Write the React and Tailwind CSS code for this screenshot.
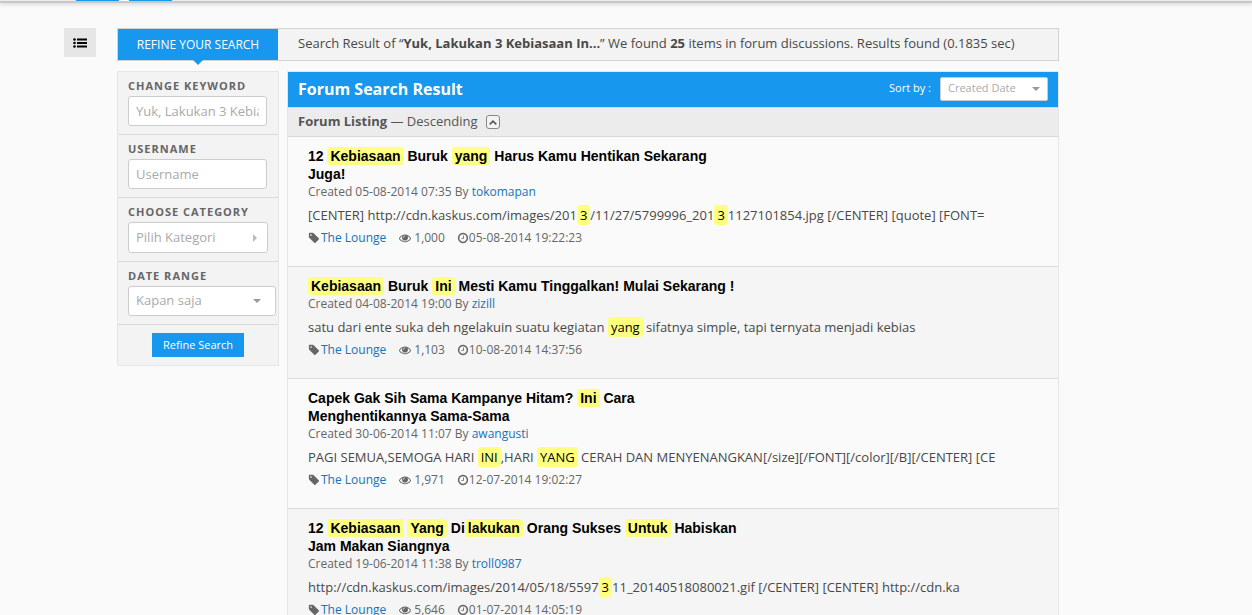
import React from 'react';

const threads = [
  {
    title: '12 *Kebiasaan* Buruk *yang* Harus Kamu Hentikan Sekarang Juga!',
    created: '05-08-2014 07:35',
    author: 'tokomapan',
    excerpt:
      '[CENTER] http://cdn.kaskus.com/images/201*3*/11/27/5799996_201*3*1127101854.jpg [/CENTER] [quote] [FONT=',
    views: '1,000',
    updated: '05-08-2014 19:22:23',
  },
  {
    title: '*Kebiasaan* Buruk *Ini* Mesti Kamu Tinggalkan! Mulai Sekarang !',
    created: '04-08-2014 19:00',
    author: 'zizill',
    excerpt: 'satu dari ente suka deh ngelakuin suatu kegiatan *yang* sifatnya simple, tapi ternyata menjadi kebias',
    views: '1,103',
    updated: '10-08-2014 14:37:56',
  },
  {
    title: 'Capek Gak Sih Sama Kampanye Hitam? *Ini* Cara Menghentikannya Sama-Sama',
    created: '30-06-2014 11:07',
    author: 'awangusti',
    excerpt: 'PAGI SEMUA,SEMOGA HARI *INI*,HARI *YANG* CERAH DAN MENYENANGKAN[/size][/FONT][/color][/B][/CENTER] [CE',
    views: '1,971',
    updated: '12-07-2014 19:02:27',
  },
  {
    title: '12 *Kebiasaan* *Yang* Di*lakukan* Orang Sukses *Untuk* Habiskan Jam Makan Siangnya',
    created: '19-06-2014 11:38',
    author: 'troll0987',
    excerpt: 'http://cdn.kaskus.com/images/2014/05/18/5597*3*11_20140518080021.gif [/CENTER] [CENTER] http://cdn.ka',
    views: '5,646',
    updated: '01-07-2014 14:05:19',
  },
];

const icons = {
  tag: 'M576 448q0-53-37.5-90.5t-90.5-37.5-90.5 37.5-37.5 90.5 37.5 90.5 90.5 37.5 90.5-37.5 37.5-90.5zm1067 576q0 53-37 90l-491 492q-39 37-91 37-53 0-90-37l-715-716q-38-37-64.5-101t-26.5-117v-416q0-52 38-90t90-38h416q53 0 117 26.5t102 64.5l715 714q37 39 37 91z',
  eye: 'M1664 960q-152-236-381-353 61 104 61 225 0 185-131.5 316.5t-316.5 131.5-316.5-131.5-131.5-316.5q0-121 61-225-229 117-381 353 133 205 333.5 326.5t434.5 121.5 434.5-121.5 333.5-326.5zm-720-384q0-20-14-34t-34-14q-125 0-214.5 89.5t-89.5 214.5q0 20 14 34t34 14 34-14 14-34q0-86 61-147t147-61q20 0 34-14t14-34zm848 384q0 34-20 69-140 230-376.5 368.5t-499.5 138.5-499.5-139-376.5-368q-20-35-20-69t20-69q140-229 376.5-368t499.5-139 499.5 139 376.5 368q20 35 20 69z',
  clock:
    'M1024 544v448q0 14-9 23t-23 9h-320q-14 0-23-9t-9-23v-64q0-14 9-23t23-9h224v-352q0-14 9-23t23-9h64q14 0 23 9t9 23zm416 352q0-148-73-273t-198-198-273-73-273 73-198 198-73 273 73 273 198 198 273 73 273-73 198-198 73-273zm224 0q0 209-103 385.5t-279.5 279.5-385.5 103-385.5-103-279.5-279.5-103-385.5 103-385.5 279.5-279.5 385.5-103 385.5 103 279.5 279.5 103 385.5z',
};

function Icon({ name, className }) {
  return (
    <svg viewBox="0 0 1792 1792" fill="currentColor" className={className} aria-hidden="true">
      <path d={icons[name]} />
    </svg>
  );
}

// Words between asterisks are search hits
function Highlighted({ text }) {
  return text.split('*').map((part, i) =>
    i % 2 === 1 ? (
      <mark key={i} className="rounded-[3px] bg-[#ffff80] px-[3px] py-px text-black">
        {part}
      </mark>
    ) : (
      part
    )
  );
}

function Caret({ right, className }) {
  return (
    <svg
      viewBox="0 0 8 8"
      className={`pointer-events-none absolute size-2 ${className}`}
      aria-hidden="true"
    >
      <path d={right ? 'M2 0l4 4-4 4z' : 'M0 2h8l-4 4z'} fill="currentColor" />
    </svg>
  );
}

function Field({ id, label, children }) {
  return (
    <div className="border-b border-[#dadada] px-[10px] pt-[6px] pb-2">
      <label htmlFor={id} className="mb-[2px] block text-[11px] leading-4 font-bold tracking-[1px] text-[#666]">
        {label}
      </label>
      {children}
    </div>
  );
}

const fieldClass =
  'block w-full appearance-none rounded-[3px] border border-[#ccc] bg-white px-[7px] text-[13px] text-[#aaa] placeholder:text-[#aaa]';

function RefineForm() {
  return (
    <form className="w-[162px] shrink-0 self-start border border-[#e6e6e6] bg-[#f3f3f3]">
      <Field id="keyword" label="CHANGE KEYWORD">
        <div className="pr-px">
          <input id="keyword" type="text" placeholder="Yuk, Lakukan 3 Kebiasaan In..." className={`h-[30px] ${fieldClass}`} />
        </div>
      </Field>
      <Field id="username" label="USERNAME">
        <div className="pr-px">
          <input id="username" type="text" placeholder="Username" className={`h-[30px] ${fieldClass}`} />
        </div>
      </Field>
      <Field id="category" label="CHOOSE CATEGORY">
        <div className="relative">
          <select id="category" className={`h-[31px] ${fieldClass}`}>
            <option>Pilih Kategori</option>
          </select>
          <Caret right className="top-[12px] right-[9px] text-[#bbb]" />
        </div>
      </Field>
      <Field id="range" label="DATE RANGE">
        <div className="relative -mr-2">
          <select id="range" className={`h-[30px] ${fieldClass}`}>
            <option>Kapan saja</option>
          </select>
          <Caret className="top-[11px] right-[15px] text-[#999]" />
        </div>
      </Field>
      <div className="flex justify-center py-2">
        <button type="button" className="h-6 bg-[#1797ee] px-[11px] text-[11px] text-white">
          Refine Search
        </button>
      </div>
    </form>
  );
}

function Thread({ thread }) {
  return (
    <li className="border-b border-[#dadada] px-5 pt-[10px] pb-[19px] odd:bg-[#fafafa] even:bg-[#f5f5f5]">
      <h3 className="max-w-[436px] font-['Liberation_Sans',Arial,sans-serif] text-[14px] leading-[18px] font-bold text-black">
        <a href="#">
          <Highlighted text={thread.title} />
        </a>
      </h3>
      <p className="text-[12px] leading-[18px] text-[#666]">
        Created {thread.created} By{' '}
        <a href="#" className="text-[#1274bb]">
          {thread.author}
        </a>
      </p>
      <p className="my-[5px] text-[13px] leading-[18px]">
        <Highlighted text={thread.excerpt} />
      </p>
      <div className="flex items-center text-[12px] leading-[18px] text-[#666]">
        <Icon name="tag" className="mr-px size-3" />
        <a href="#" className="text-[#1274bb]">
          The Lounge
        </a>
        <Icon name="eye" className="mr-[3px] ml-[13px] size-3" />
        <span>{thread.views}</span>
        <Icon name="clock" className="ml-3 size-3" />
        <span>{thread.updated}</span>
      </div>
    </li>
  );
}

function App() {
  return (
    <div className="min-h-screen bg-[#fafafa] font-['Open_Sans',sans-serif] text-[13px] text-[#484848]">
      <div className="h-[3px] border-b-2 border-[#c8c8c8] bg-[#ececec] shadow-[0_1px_4px_rgba(0,0,0,0.2)]">
        <div className="mx-auto flex h-px max-w-[1100px]">
          <span className="w-[43px] bg-[#1797ee]" />
          <span className="w-[10px] bg-white" />
          <span className="w-[43px] bg-[#1797ee]" />
        </div>
      </div>

      <div className="mx-auto flex max-w-[1124px] items-start pt-[25px]">
        <button type="button" aria-label="Menu" className="flex h-[29px] w-8 shrink-0 items-center justify-center bg-[#e6e6e6] text-black">
          <svg viewBox="0 0 14 10" className="h-[10px] w-[14px]" fill="currentColor" aria-hidden="true">
            <circle cx="1.5" cy="1.5" r="1.3" />
            <circle cx="1.5" cy="5" r="1.3" />
            <circle cx="1.5" cy="8.5" r="1.3" />
            <path d="M4 .5h10v2H4zM4 4h10v2H4zM4 7.5h10v2H4z" />
          </svg>
        </button>

        <div className="mr-[129px] ml-[21px] min-w-0 flex-1">
          <div className="flex h-[33px] items-center border border-[#d2d2d2] bg-[#f3f3f3]">
            <div className="relative flex h-full w-[160px] items-center justify-center bg-[#1797ee] text-[12px] text-white">
              REFINE YOUR SEARCH
              <span className="absolute top-full left-1/2 -ml-[5px] border-x-[5px] border-t-[5px] border-x-transparent border-t-[#1797ee]" />
            </div>
            <p className="pb-[2px] pl-5">
              Search Result of “<b>Yuk, Lakukan 3 Kebiasaan In...</b>” We found <b>25</b> items in forum
              discussions. Results found (0.1835 sec)
            </p>
          </div>

          <div className="mt-[10px] flex gap-2">
            <RefineForm />

            <main className="min-w-0 flex-1 border border-[#e6e6e6]">
              <div className="flex h-[35px] items-center bg-[#1797ee] px-[10px] pb-[2px] text-white">
                <h2 className="flex-1 text-[16px] font-bold">Forum Search Result</h2>
                <label htmlFor="sort" className="mr-[9px] text-[11px]">
                  Sort by :
                </label>
                <div className="relative w-[108px]">
                  <select
                    id="sort"
                    className="block h-6 w-full appearance-none rounded-[2px] border border-[#ccc] bg-white px-[7px] text-[11px] text-[#aaa]"
                  >
                    <option>Created Date</option>
                  </select>
                  <Caret className="top-2 right-2 text-[#999]" />
                </div>
              </div>
              <div className="flex h-[30px] items-center border-y border-[#dadada] bg-[#ececec] px-[10px] text-[#555]">
                <p>
                  <b>Forum Listing</b> — Descending
                </p>
                <button
                  type="button"
                  aria-label="Sort ascending"
                  className="ml-2 flex size-[14px] items-center justify-center rounded-[3px] border border-[#888] bg-[#f3f3f3]"
                >
                  <svg viewBox="0 0 8 5" className="h-[5px] w-2" fill="none" stroke="#555" strokeWidth="1.6" aria-hidden="true">
                    <path d="M.7 4.4L4 1.2l3.3 3.2" />
                  </svg>
                </button>
              </div>
              <ul>
                {threads.map((thread) => (
                  <Thread key={thread.title} thread={thread} />
                ))}
              </ul>
            </main>
          </div>
        </div>
      </div>
    </div>
  );
}

export default App;
